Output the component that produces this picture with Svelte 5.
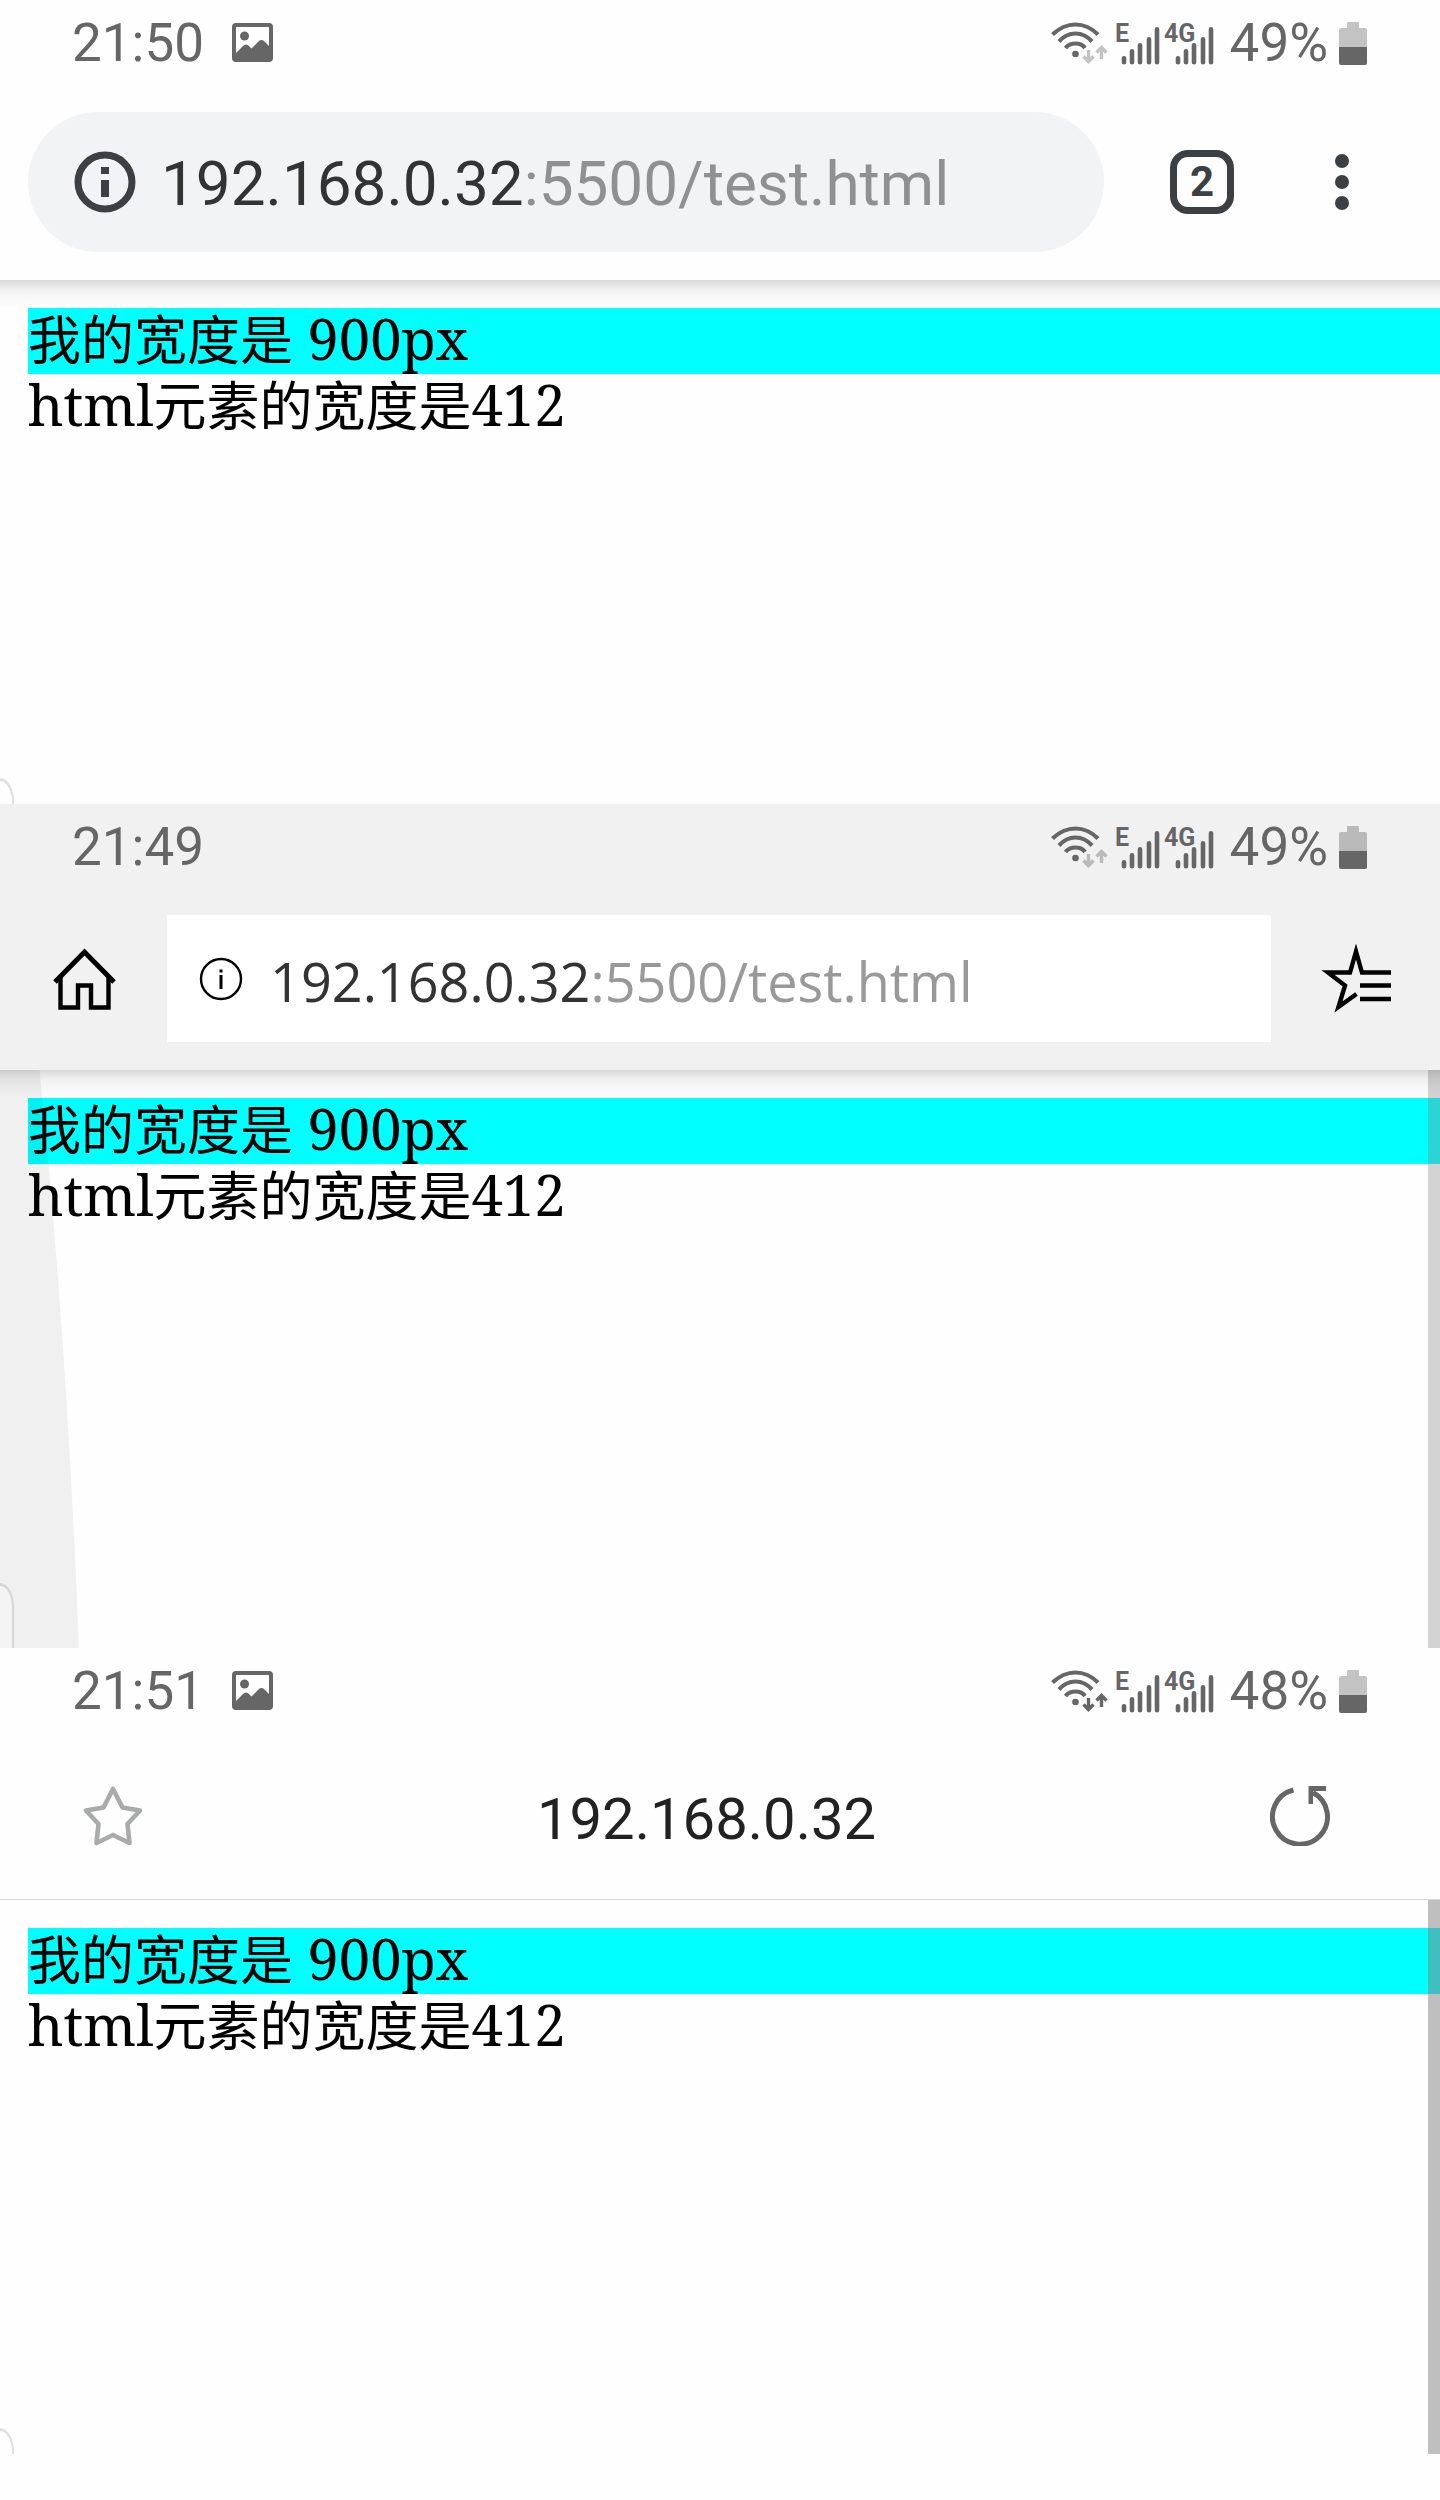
<script>
  const screens = [
    { kind: 'chrome', time: '21:50', photo: true, battery: '49%', active: false },
    { kind: 'edge', time: '21:49', photo: false, battery: '49%', active: false },
    { kind: 'samsung', time: '21:51', photo: true, battery: '48%', active: true }
  ];
  const bars = [[0, 54], [8, 47], [16, 41], [25, 35], [33, 25]];
  const host = '192.168.0.32';
  const path = ':5500/test.html';
</script>

<main>
  {#each screens as s}
    <section class="screen {s.kind}">
      <header>
        <div class="status">
          <span>{s.time}</span>
          {#if s.photo}
            <svg class="photo" width="42" height="40" viewBox="0 0 42 40" aria-hidden="true">
              <path fill="currentColor" fill-rule="evenodd" d="M4 0H37Q41 0 41 4V35Q41 39 37 39H4Q0 39 0 35V4Q0 0 4 0ZM4 4V30L11 23Q14 20 17 23L19.500 25.500L27 18Q29.500 16 32 18L37 23V4Z" />
              <circle cx="12.500" cy="13" r="4.500" fill="currentColor" />
            </svg>
          {/if}
          <span class="spring"></span>
          <svg class="network" width="166" height="46" viewBox="1050 18 166 46" aria-hidden="true">
            <g fill="none" stroke="currentColor" stroke-width="4.200">
              <path d="M1052.500 32.500Q1063 22.500 1075.500 22.500T1098 32.500" />
              <path d="M1059 39.500Q1066 31.500 1075.500 31.500T1092 39.500" />
              <path d="M1065.500 46Q1069 41.500 1075.500 41.500T1085 46" />
            </g>
            <circle cx="1075.500" cy="52" r="3.300" fill="currentColor" />
            <g class="arrows" class:active={s.active} fill="none" stroke-width="3.400">
              <path d="M1088.500 48V60M1083.500 54.500L1088.500 59.500L1093.500 54.500" />
              <path d="M1101.500 57V45M1096.500 50.500L1101.500 45.500L1106.500 50.500" />
            </g>
            <text x="1115" y="40">E</text>
            <text x="1164" y="40">4G</text>
            <g stroke="currentColor" stroke-width="4.600" stroke-linecap="round">
              {#each bars as [x, top]}
                <path d="M{1124 + x} {top + 2.300}V60.200M{1178 + x} {top + 2.300}V60.200" />
              {/each}
            </g>
          </svg>
          <span class="percent">{s.battery}</span>
          <svg width="28" height="43" viewBox="0 0 28 43" aria-hidden="true">
            <path class="pale" d="M8 1Q8 0 9 0H19Q20 0 20 1V6H26Q28 6 28 8V25H0V8Q0 6 2 6H8Z" />
            <path fill="currentColor" d="M0 25H28V41Q28 43 26 43H2Q0 43 0 41Z" />
          </svg>
        </div>

        {#if s.kind === 'chrome'}
          <nav class="toolbar" aria-label="Chrome">
            <div class="address">
              <button aria-label="Site information">
                <svg width="62" height="62" viewBox="0 0 62 62">
                  <circle cx="31" cy="31" r="27" fill="none" stroke="currentColor" stroke-width="7" />
                  <path d="M27 16H35V23H27ZM27 29H35V46H27Z" fill="currentColor" />
                </svg>
              </button>
              <button class="url">{host}<span>{path}</span></button>
            </div>
            <button class="tabs" aria-label="2 open tabs">2</button>
            <button class="more" aria-label="More options">
              <svg width="16" height="58" viewBox="0 0 16 58">
                <g fill="currentColor">
                  <circle cx="8" cy="8" r="7" />
                  <circle cx="8" cy="29" r="7" />
                  <circle cx="8" cy="50" r="7" />
                </g>
              </svg>
            </button>
          </nav>
        {:else if s.kind === 'edge'}
          <nav class="toolbar" aria-label="Edge">
            <button aria-label="Home">
              <svg width="64" height="64" viewBox="0 0 64 64">
                <g fill="none" stroke="currentColor" stroke-width="4.400">
                  <path d="M2 35L31.500 5L61 35" stroke-width="5" />
                  <path d="M7.500 29V60.500H25V38.500H38V60.500H55.500V29" />
                </g>
              </svg>
            </button>
            <div class="address">
              <button aria-label="Site information">
                <svg width="44" height="44" viewBox="0 0 44 44">
                  <circle cx="22" cy="22" r="20" fill="none" stroke="currentColor" stroke-width="2.400" />
                  <path d="M20.500 12.500H23.500V15.500H20.500ZM20.500 18H23.500V32H20.500Z" fill="currentColor" />
                </svg>
              </button>
              <button class="url">{host}<span>{path}</span></button>
            </div>
            <button aria-label="Favorites">
              <svg width="70" height="70" viewBox="0 0 70 70">
                <g fill="none" stroke="currentColor" stroke-width="4.400" stroke-miterlimit="10">
                  <path d="M70 28.500H41L35 7.500L29 28.500H7L24 41.500L17.500 63L35.500 50" />
                  <path d="M39 41.500H70M39 55H70" />
                </g>
              </svg>
            </button>
          </nav>
        {:else}
          <nav class="toolbar" aria-label="Samsung Internet">
            <button class="star" aria-label="Add bookmark">
              <svg width="60" height="60" viewBox="0 0 60 60">
                <path d="M30 3L39.500 21.500L57 24.500L44.500 38L46.500 57L30 49L13.500 57L15.500 38L3 24.500L20.500 21.500Z" fill="none" stroke="currentColor" stroke-width="4.600" stroke-linejoin="round" />
              </svg>
            </button>
            <button class="url">{host}</button>
            <button aria-label="Reload">
              <svg width="60" height="60" viewBox="0 0 60 60">
                <path d="M23.500 4A27.500 27.500 0 1 0 43 6.500" fill="none" stroke="currentColor" stroke-width="5" />
                <path d="M38.500 0H56V5H43V18H38.500Z" fill="currentColor" />
              </svg>
            </button>
          </nav>
        {/if}
      </header>

      <article>
        <p class="wide"><span class="cjk">我的宽度是</span>{' 900px'}</p>
        <p>html<span class="cjk">元素的宽度是</span>412</p>
        {#if s.kind === 'edge'}
          <svg class="sweep" width="80" height="578" viewBox="0 0 80 578" preserveAspectRatio="none" aria-hidden="true">
            <path d="M0 0H39.500Q67 270 79 578H0Z" />
          </svg>
        {/if}
        <i class="handle"></i>
        {#if s.kind !== 'chrome'}<i class="scroll"></i>{/if}
      </article>
    </section>
  {/each}
</main>

<style>
  :global(body) { background: #fefefe; }
  main { font-family: Roboto, sans-serif; overflow: hidden; padding-bottom: 46px; }
  svg { display: block; flex: none; }
  button {
    border: 0; padding: 0; background: none; color: inherit; font: inherit;
    display: flex; align-items: center; cursor: pointer; flex: none;
  }
  header { position: relative; z-index: 1; background: #fefefe; }

  .status {
    display: flex; align-items: center; height: 86px; box-sizing: border-box;
    padding: 0 73px 0 72px; font-size: 53px; line-height: 62px; color: #666;
  }
  .photo { margin-left: 28px; }
  .spring { flex: 1; }
  .network text { font: 700 25px Roboto, sans-serif; fill: currentColor; }
  .arrows { stroke: #c3c3c3; }
  .arrows.active { stroke: currentColor; }
  .pale { fill: #c3c3c3; }
  .edge .arrows { stroke: #bababa; }
  .edge .pale { fill: #bababa; }
  .percent { margin: 0 11px 0 14px; }

  .toolbar { display: flex; align-items: center; }
  .address { display: flex; align-items: center; flex: 1; min-width: 0; }
  .url { white-space: nowrap; padding-top: 4px; }

  .chrome header::after, .edge header::after {
    content: ""; position: absolute; left: 0; right: 0; top: 100%; height: 28px;
    background: linear-gradient(rgba(0, 0, 0, 0.15), rgba(0, 0, 0, 0.06) 9px, rgba(0, 0, 0, 0.03) 16px, transparent);
  }
  .chrome .toolbar { padding: 26px 90px 28px 28px; color: #3c4043; }
  .chrome .address {
    height: 140px; border-radius: 70px; background: #f1f3f4;
    padding-left: 46px; gap: 25px; box-sizing: border-box;
  }
  .chrome .url { font-size: 62px; line-height: 72px; color: #333; }
  .chrome .url span { color: #8f9091; }
  .tabs {
    box-sizing: border-box; width: 64px; height: 64px; margin: 0 100px 0 66px;
    border: 7px solid #3c4043; border-radius: 18px; justify-content: center;
    font-weight: 700; font-size: 42px; line-height: 50px;
  }

  .edge header { background: #f1f1f1; }
  .edge .toolbar { padding: 25px 49px 28px 53px; gap: 50px; color: #000; }
  .edge .address { height: 127px; background: #fff; padding-left: 32px; gap: 27px; }
  .edge .url { font-family: "Open Sans", sans-serif; font-size: 54px; line-height: 72px; color: #333; }
  .edge .url span { color: #999; }

  .samsung header { border-bottom: 1px solid #d6d6d6; }
  .samsung .toolbar { height: 165px; padding: 0 110px 2px 83px; box-sizing: border-box; color: #666; }
  .samsung .star { color: #a9abaa; }
  .samsung .url { flex: 1; justify-content: center; padding-top: 6px; font-size: 58px; line-height: 68px; color: #222; }

  article {
    position: relative; box-sizing: border-box; min-height: 524px;
    padding: 28px 0 0 28px; color: #000;
    font: 56px/60px "Noto Serif", "DejaVu Serif", serif;
  }
  .edge article { min-height: 578px; }
  .samsung article { min-height: 554px; }
  p { margin: 0; padding-bottom: 6px; white-space: pre; }
  .wide { background: #0ff; }
  .cjk { font-family: "Noto Sans CJK SC", sans-serif; font-size: 53px; line-height: 1px; }
  .sweep { position: absolute; left: 0; top: 0; height: 100%; fill: rgba(0, 0, 0, 0.055); }
  .scroll { position: absolute; right: 0; top: 0; bottom: 0; width: 12px; background: rgba(130, 130, 130, 0.345); }
  .samsung .scroll { background: rgba(128, 128, 128, 0.5); }
  .handle {
    position: absolute; left: 0; bottom: 0; width: 14px; height: 26px; box-sizing: border-box;
    border: 2px solid #e0e0e0; border-width: 3px 2px 0 0; border-top-right-radius: 14px 24px;
  }
  .edge .handle { height: 65px; background: #f4f4f4; border-color: #d6d6d6; }
</style>
